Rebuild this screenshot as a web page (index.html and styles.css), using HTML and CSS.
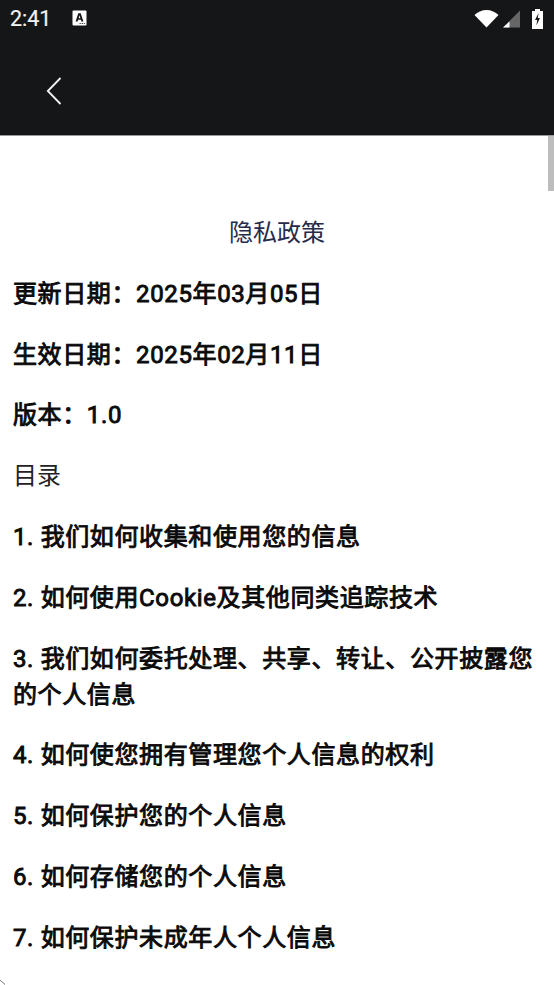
FILE: index.html
```html
<!doctype html>
<html>
  <head>
    <meta charset="utf-8" />
    <title>隐私政策</title>
    <link rel="stylesheet" href="styles.css">
  </head>
  <body>
    <div id="header">
      <div id="status-bar">
        <div class="status-left">
          <span class="clock">2:41</span>
          <svg class="notify-icon" width="15" height="16" viewBox="0 0 15 16">
            <rect x="0.5" y="0.5" width="14" height="15" rx="1" fill="#fff"/>
            <path d="M3.6 11.5 L6.3 3.2 H8.7 L11.4 11.5 H9.4 L8.9 9.8 H6.1 L5.6 11.5 Z M6.6 8.2 H8.4 L7.5 5.2 Z" fill="#151618" fill-rule="evenodd"/>
            <path d="M7.5 13 h1.4 v1 h-1.4z M9.6 13 h1.4 v1 h-1.4z M11.7 13 h1.4 v1 h-1.4z" fill="#555"/>
          </svg>
        </div>
        <div class="status-right">
          <svg width="25" height="19" viewBox="0 0 25 19">
            <path d="M0.5 6 C3.5 3 8 1 12.5 1 C17 1 21.5 3 24.5 6 L12.5 18.5 Z" fill="#fff"/>
          </svg>
          <svg width="17" height="18" viewBox="0 0 17 18">
            <path d="M17 0.5 V17.5 H0 Z" fill="#666"/>
            <path d="M6.5 11.5 V17.5 H0 Z" fill="#fff"/>
          </svg>
          <svg class="battery" width="11" height="20" viewBox="0 0 11 20">
            <path d="M3 0 H8 V2 H11 V20 H0 V2 H3 Z" fill="#fff"/>
            <path d="M6.6 4 L3 11 H5.2 L4.4 16.5 L8 9 H5.8 Z" fill="#151618"/>
          </svg>
        </div>
      </div>
      <div id="toolbar">
        <svg width="16" height="28" viewBox="0 0 16 28">
          <path d="M14.5 1 L1.8 14 L14.5 27" fill="none" stroke="#f4f4f4" stroke-width="1.8"/>
        </svg>
      </div>
    </div>

    <div id="content">
      <div class="scrollbar"></div>
      <p class="title">隐私政策</p>
      <p class="bold">更新日期：2025年03月05日</p>
      <p class="bold">生效日期：2025年02月11日</p>
      <p class="bold">版本：1.0</p>
      <p>目录</p>
      <p class="bold">1. 我们如何收集和使用您的信息</p>
      <p class="bold">2. 如何使用Cookie及其他同类追踪技术</p>
      <p class="bold">3. 我们如何委托处理、共享、转让、公开披露您的个人信息</p>
      <p class="bold">4. 如何使您拥有管理您个人信息的权利</p>
      <p class="bold">5. 如何保护您的个人信息</p>
      <p class="bold">6. 如何存储您的个人信息</p>
      <p class="bold">7. 如何保护未成年人个人信息</p>
      <svg class="speck" width="6" height="5" viewBox="0 0 6 5">
        <path d="M0 0 L5 4.5" fill="none" stroke="#777" stroke-width="1"/>
      </svg>
    </div>
  </body>
</html>
```

FILE: styles.css
```css
html, body {
    margin: 0;
    padding: 0;
    height: 985px;
    overflow: hidden;
    background: #fff;
}
body {
    font-family: Roboto, "Noto Sans CJK SC", sans-serif;
    color: #151618;
}
#header {
    background: #151618;
    height: 135px;
    border-bottom: 1px solid #999;
}
#status-bar {
    height: 37px;
    display: flex;
    justify-content: space-between;
    align-items: center;
    padding: 0 11px 0 10px;
    color: #f2f2f2;
}
.status-left, .status-right {
    display: flex;
    align-items: center;
}
.clock {
    font-size: 21.5px;
    width: 62px;
    -webkit-text-stroke: 0.2px #f2f2f2;
}
.notify-icon {
    margin-top: -2px;
}
.status-right svg {
    margin-left: 4px;
}
.status-right .battery {
    margin-left: 12px;
}
#toolbar {
    height: 98px;
    display: flex;
    align-items: center;
    padding: 10px 0 0 46px;
    box-sizing: border-box;
}
#content {
    position: relative;
    padding: 79px 13px 0;
    height: 770px;
    overflow: hidden;
}
.scrollbar {
    position: absolute;
    top: 0;
    right: 0;
    width: 6px;
    height: 55px;
    background: #bdbdbd;
}
.speck {
    position: absolute;
    left: 0;
    bottom: 0;
}
p {
    margin: 0 0 24.8px;
    font-size: 24px;
    line-height: 36px;
    color: #222;
}
.title {
    text-align: center;
    color: #262b4a;
}
.bold {
    color: #0a0a0a;
    letter-spacing: 0.62px;
    -webkit-text-stroke: 0.9px #0a0a0a;
}
```
